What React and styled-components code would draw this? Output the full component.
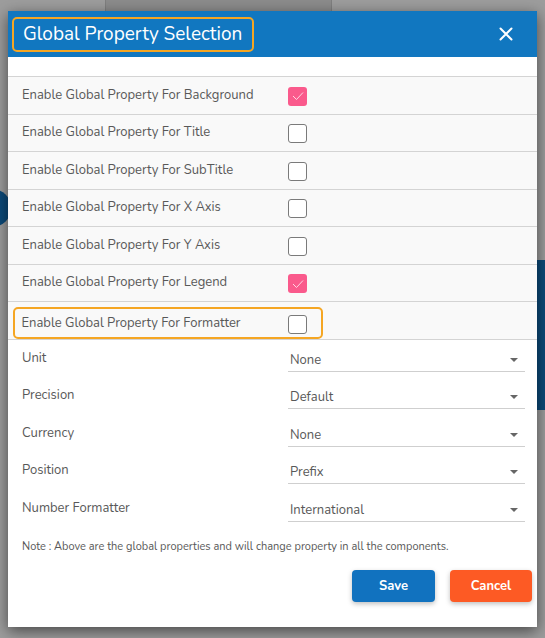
import React from "react";
import styled, { createGlobalStyle } from "styled-components";

const Global = createGlobalStyle`
  html, body { margin: 0; padding: 0; }
  body { font-family: "Nunito", Lato, "Noto Sans", sans-serif; background: #9c9c9c; }
  #root { min-height: 638px; }
`;

const Backdrop = styled.div`
  position: relative;
  width: 545px;
  height: 638px;
  background: #9d9d9d;
  overflow: hidden;
`;

const BehindBar = styled.div`
  position: absolute;
  left: 105px;
  top: 0;
  width: 225px;
  height: 12px;
  background: #8c8c8c;
  border: 1px solid #7f7f7f;
  border-top: none;
`;

const BehindBlue = styled.div`
  position: absolute;
  left: ${(p) => p.$x}px;
  top: ${(p) => p.$y}px;
  width: ${(p) => p.$w}px;
  height: ${(p) => p.$h}px;
  border-radius: ${(p) => p.$r || 0}px;
  background: #0c4a7a;
`;

const Dialog = styled.div`
  position: absolute;
  left: 8px;
  top: 11px;
  width: 529px;
  height: 616px;
  background: #fff;
  box-shadow: 0 4px 14px rgba(0, 0, 0, 0.55);
  display: flex;
  flex-direction: column;
`;

const Header = styled.div`
  height: 46px;
  background: #1177c0;
  display: flex;
  align-items: center;
  justify-content: space-between;
  padding: 0 24px 0 4px;
  flex-shrink: 0;
`;

const Title = styled.div`
  border: 2.5px solid #f5a623;
  border-radius: 5px;
  padding: 3px 10px 4px 9px;
  color: #fff;
  font-size: 19px;
  line-height: 24px;
`;

const Close = styled.button`
  background: none;
  border: none;
  padding: 0;
  width: 14px;
  height: 14px;
  display: flex;
  cursor: pointer;
`;

const Spacer = styled.div`
  height: 19px;
  border-bottom: 1px solid #d4d4d4;
  flex-shrink: 0;
`;

const CheckRow = styled.div`
  height: 36.5px;
  display: flex;
  align-items: ${(p) => (p.$hl ? "flex-start" : "center")};
  background: #f9f9f9;
  border-bottom: 1px solid #d4d4d4;
  padding-left: 14px;
  flex-shrink: 0;
`;

const CheckInner = styled.div`
  display: flex;
  align-items: center;
  box-sizing: border-box;
  border-radius: 5px;
  ${(p) =>
    p.$hl
      ? `margin-left: -9px; padding-left: 6.5px; border: 2.5px solid #f5a623; width: 310px; height: 32px; margin-top: 5px;`
      : `height: 31px;`}
`;

const Label = styled.span`
  font-size: 13px;
  color: #585858;
  width: 266px;
  flex-shrink: 0;
  margin-top: -1px;
`;

const Box = styled.span`
  width: 19px;
  height: 19px;
  box-sizing: border-box;
  border-radius: 3px;
  margin-top: 2px;
  border: ${(p) => (p.$checked ? "none" : "1.5px solid #7a7a7a")};
  background: ${(p) => (p.$checked ? "#fa5a8c" : "#fff")};
  display: flex;
  align-items: center;
  justify-content: center;
`;

const Form = styled.div`
  padding: 9px 12px 0 14px;
  display: flex;
  flex-direction: column;
`;

const FieldRow = styled.div`
  height: 37.5px;
  display: flex;
  align-items: flex-start;
`;

const FieldLabel = styled.span`
  width: 266px;
  font-size: 13px;
  line-height: 18px;
  color: #585858;
`;

const Select = styled.div`
  flex: 1;
  height: 22px;
  border-bottom: 1px solid #cfcfcf;
  display: flex;
  align-items: center;
  justify-content: space-between;
  padding: 0 7px 0 2px;
  font-size: 13px;
  color: #585858;
`;

const Caret = styled.span`
  width: 0;
  height: 0;
  border-left: 4px solid transparent;
  border-right: 4px solid transparent;
  border-top: 4px solid #666;
`;

const Note = styled.div`
  font-size: 11px;
  line-height: 15px;
  color: #585858;
  padding: 3px 0 0 14px;
`;

const Actions = styled.div`
  display: flex;
  justify-content: flex-end;
  gap: 15px;
  padding: 16px 5px 0 0;
`;

const Btn = styled.button`
  width: ${(p) => p.$w}px;
  height: 32px;
  border: none;
  border-radius: 4px;
  color: #fff;
  font-family: inherit;
  font-size: 13px;
  font-weight: 700;
  background: ${(p) => p.$bg};
  box-shadow: 0 2px 5px rgba(0, 0, 0, 0.25);
  cursor: pointer;
`;

const items = [
  ["Background", true],
  ["Title", false],
  ["SubTitle", false],
  ["X Axis", false],
  ["Y Axis", false],
  ["Legend", true],
  ["Formatter", false],
];

const fields = [
  ["Unit", "None"],
  ["Precision", "Default"],
  ["Currency", "None"],
  ["Position", "Prefix"],
  ["Number Formatter", "International"],
];

export default function App() {
  return (
    <>
      <Global />
      <Backdrop>
        <BehindBar />
        <BehindBlue $x={-20} $y={190} $w={30} $h={36} $r={18} />
        <BehindBlue $x={530} $y={260} $w={20} $h={150} />
        <Dialog>
          <Header>
            <Title>Global Property Selection</Title>
            <Close aria-label="close">
              <svg width="14" height="14" viewBox="0 0 14 14">
                <path d="M1.5 1.5 L12.5 12.5 M12.5 1.5 L1.5 12.5" stroke="#fff" strokeWidth="2" strokeLinecap="round" />
              </svg>
            </Close>
          </Header>
          <Spacer />
          {items.map(([name, checked]) => {
            const hl = name === "Formatter";
            return (
              <CheckRow key={name} $hl={hl}>
                <CheckInner $hl={hl}>
                  <Label>Enable Global Property For {name}</Label>
                  <Box $checked={checked}>
                    {checked && (
                      <svg width="12" height="10" viewBox="0 0 12 10">
                        <path d="M1 5 L4.5 8.5 L11 1.5" stroke="#ffd6e4" strokeWidth="1" fill="none" />
                      </svg>
                    )}
                  </Box>
                </CheckInner>
              </CheckRow>
            );
          })}
          <Form>
            {fields.map(([l, v]) => (
              <FieldRow key={l}>
                <FieldLabel>{l}</FieldLabel>
                <Select>
                  <span>{v}</span>
                  <Caret />
                </Select>
              </FieldRow>
            ))}
          </Form>
          <Note>Note : Above are the global properties and will change property in all the components.</Note>
          <Actions>
            <Btn $w={83} $bg="#1172bf">Save</Btn>
            <Btn $w={82} $bg="#fd5a24">Cancel</Btn>
          </Actions>
        </Dialog>
      </Backdrop>
    </>
  );
}
